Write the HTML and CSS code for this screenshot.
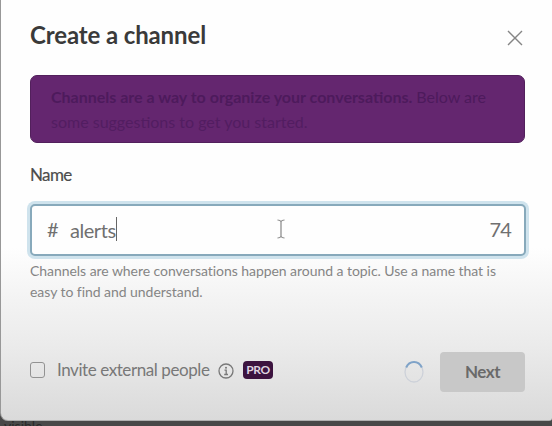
FILE: index.html
```html
<!DOCTYPE html>
<html lang="en">
<head>
<meta charset="utf-8">
<title>Create a channel</title>
<link rel="stylesheet" href="styles.css">
</head>
<body>
<div class="modal">
  <header class="header">
    <h1 class="title">Create a channel</h1>
    <svg class="close" viewBox="0 0 16 16"><path d="M1 1L15 15M15 1L1 15"/></svg>
  </header>
  <div class="banner">
    <div class="banner-line"><b>Channels are a way to organize your conversations.</b> Below are</div>
    <div class="banner-line second">some suggestions to get you started.</div>
  </div>
  <div class="label">Name</div>
  <div class="field">
    <span class="hash">#</span>
    <span class="value">alerts</span><span class="caret"></span>
    <span class="count">74</span>
    <svg class="pointer" viewBox="0 0 8 20"><path d="M.5 1Q3 1 4 2.500Q5 1 7.500 1M4 2.500V17.500M.5 19Q3 19 4 17.500Q5 19 7.500 19"/></svg>
  </div>
  <div class="hint">
    <div class="hint-line">Channels are where conversations happen around a topic. Use a name that is</div>
    <div class="hint-line second">easy to find and understand.</div>
  </div>
  <footer class="footer">
    <div class="option">
      <span class="checkbox"></span>
      <span class="invite">Invite external people</span>
      <svg class="info" viewBox="0 0 16 16"><circle cx="8" cy="8" r="7"/><path d="M6.500 7.200H8.200V11.500M6.200 11.500H10"/><circle class="dot" cx="8" cy="4.700" r="1"/></svg>
      <span class="pro">PRO</span>
    </div>
    <svg class="spinner" viewBox="0 0 22 24"><ellipse class="track" cx="11" cy="12" rx="9" ry="10"/><path d="M3.200 7.500Q5.500 2 11 2T18.800 7.500"/></svg>
    <span class="next">Next</span>
  </footer>
</div>
<div class="behind">visible</div>
</body>
</html>
```
FILE: styles.css
```css
* { box-sizing: border-box; }
body {
  margin: 0;
  width: 552px;
  height: 426px;
  overflow: hidden;
  background: #484848;
  font-family: Lato, "Liberation Sans", sans-serif;
  color: #333;
}
.modal {
  height: 421px;
  padding: 0 27px 0 29px;
  border-left: 1px solid #989898;
  border-bottom: 1px solid #b0b0b0;
  border-radius: 0 0 3px 8px;
  background: linear-gradient(#fefefe 0, #fefefe 248px, #f3f3f3 300px, #ebebeb 345px, #dadada 420px);
}
.header {
  display: flex;
  justify-content: space-between;
  height: 75px;
  padding-top: 20px;
}
.title {
  margin: 0;
  font-size: 24px;
  line-height: 30px;
  font-weight: 700;
  letter-spacing: -.12px;
  color: #3a3a3a;
  white-space: nowrap;
}
.close {
  width: 16px;
  height: 16px;
  margin: 10px 2px 0 0;
  fill: none;
  stroke: #858585;
  stroke-width: 1.4;
}
.banner {
  height: 68px;
  padding: 8px 0 0 20px;
  border: 1px solid #52205c;
  border-radius: 7px;
  background: #64266f;
  color: #4d1a5c;
  font-size: 16px;
  line-height: 25px;
  white-space: nowrap;
}
.banner-line.second { color: #521d61; }
.label {
  margin-top: 22px;
  height: 39px;
  font-size: 17px;
  line-height: 20px;
  letter-spacing: -.6px;
  color: #4c4c4c;
  -webkit-text-stroke: .2px #4c4c4c;
}
.field {
  position: relative;
  display: flex;
  align-items: center;
  height: 52px;
  margin-right: -1px;
  padding: 0 13px 2px 15px;
  border: 2px solid #87a9bb;
  border-radius: 5px;
  box-shadow: 0 0 0 3px #cfe3ed;
  background: #fefefe;
  font-size: 20px;
  color: #707070;
}
.hash { width: 23px; font-size: 20px; }
.value { letter-spacing: -.45px; padding-top: 2px; }
.caret { width: 1.5px; height: 24px; background: #666; }
.count { margin-left: auto; letter-spacing: -.8px; }
.pointer {
  position: absolute;
  left: 245px;
  top: 13px;
  width: 8px;
  height: 20px;
  fill: none;
  stroke: #858585;
  stroke-width: 1.2;
}
.hint {
  padding-top: 4px;
  height: 96px;
  font-size: 14px;
  line-height: 21px;
  letter-spacing: -.05px;
  color: #858585;
  white-space: nowrap;
}
.footer { display: flex; align-items: center; height: 40px; white-space: nowrap; }
.option { display: flex; align-items: center; height: 40px; padding-bottom: 5px; }
.checkbox {
  width: 15px;
  height: 16px;
  border: 1.5px solid #929292;
  border-radius: 3px;
}
.invite { width: 161px; margin-left: 12px; font-size: 17px; letter-spacing: -.42px; color: #787878; }
.info { width: 16px; height: 16px; margin-top: 2px; fill: none; stroke: #787878; stroke-width: 1.3; }
.info .dot { fill: #787878; stroke: none; }
.pro {
  width: 30px;
  height: 18px;
  margin-left: 9px;
  border-radius: 4px;
  background: #3c133f;
  color: #dfd3e0;
  font-size: 12px;
  line-height: 18px;
  font-weight: 700;
  letter-spacing: -.4px;
  text-align: center;
}
.spinner { width: 22px; height: 24px; margin-left: auto; fill: none; stroke: #7fa3c8; stroke-width: 2; }
.spinner .track { stroke: #cdd1d9; stroke-width: 1.3; }
.next {
  width: 85px;
  height: 40px;
  margin-left: 15px;
  border-radius: 4px;
  background: #c8c8c8;
  color: #6a6a6a;
  font-size: 17px;
  line-height: 40px;
  font-weight: 700;
  letter-spacing: -.5px;
  text-align: center;
}
.behind { height: 5px; overflow: hidden; padding-left: 4px; font-size: 14px; line-height: 9px; color: #292929; }
```
